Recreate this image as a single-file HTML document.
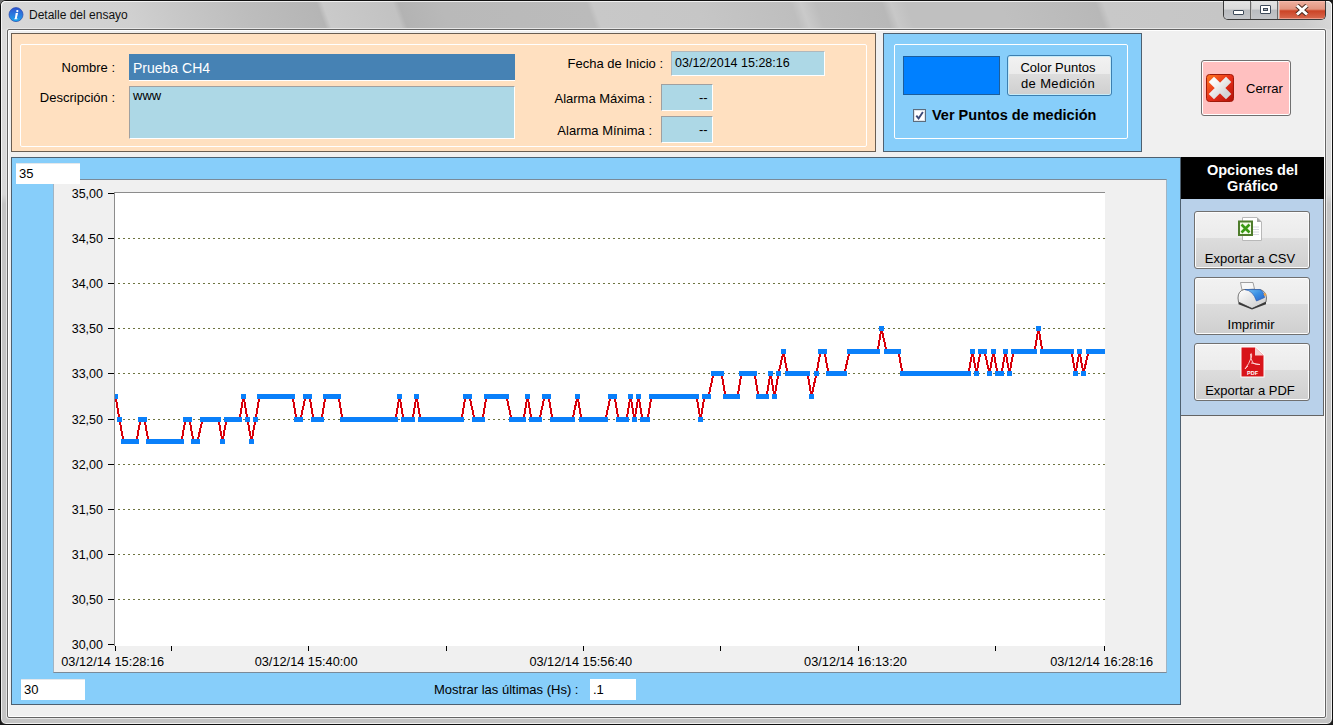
<!DOCTYPE html>
<html><head><meta charset="utf-8">
<style>
*{margin:0;padding:0;box-sizing:border-box}
html,body{width:1333px;height:725px;overflow:hidden;background:#1a1a1a}
body{position:relative;font-family:"Liberation Sans",sans-serif;font-size:13px;color:#000}
.a{position:absolute}
.t{position:absolute;white-space:nowrap;line-height:1}
#frame{left:0;top:0;width:1333px;height:725px;border:1px solid #111;border-radius:6px;
 background:linear-gradient(#dcdcdc 0,#d8d8d8 193px,#c4c4c4 203px,#c4c4c4 100%);
 box-shadow:inset 0 0 0 1px rgba(255,255,255,.75)}
#title{left:1px;top:1px;width:1331px;height:28px;border-radius:5px 5px 0 0;
 background:linear-gradient(70deg,#d8d8d8 3.8px,#d0d0d0 126.0px,#c8c8c8 168.3px,#bdbdbd 236.0px,#b5b5b5 305.5px,#cacaca 311.1px,#c2c2c2 376.9px,#b3b3b3 382.5px,#b9b9b9 422.0px,#bbbbbb 559.2px,#c8c8c8 564.8px,#c6c6c6 661.6px,#bebebe 750.9px,#cacaca 760.3px,#bdbdbd 774.4px,#b8b8b8 836.4px,#c8c8c8 844.9px,#c0c0c0 859.0px,#c0c0c0 947.3px,#b8b8b8 1037.5px,#c8c8c8 1045.0px,#c6c6c6 1152.2px,#cccccc 1225.4px,#d8d8d8 1256.5px);
 box-shadow:inset 0 1px 0 rgba(255,255,255,.75),inset 1px 0 0 rgba(255,255,255,.75),inset -1px 0 0 rgba(255,255,255,.75)}
#client{left:7px;top:29px;width:1319px;height:689px;border:1px solid #646464;border-radius:2px;background:#f0f0f0;box-shadow:inset 0 0 0 1px #fff,0 0 0 1px #e6e6e6}
.panel{position:absolute;border:1px solid #646464}
.grp{position:absolute;border:1px solid #fff;border-radius:2px}
.lbl{position:absolute;white-space:nowrap;line-height:1;font-size:13px}
.tb{position:absolute;border-top:1px solid #a0a0a0;border-left:1px solid #a0a0a0;border-bottom:1px solid #fff;border-right:1px solid #fff}
.btn{position:absolute;border:1px solid #707070;border-radius:3px;background:linear-gradient(#f2f2f2 0%,#ebebeb 46%,#dddddd 46%,#cfcfcf 100%);box-shadow:inset 0 0 0 1px #fcfcfc}
</style></head><body>
<div class="a" style="left:0;top:0;width:7px;height:7px;background:#6e6e6e"></div>
<div id="frame" class="a"></div>
<div id="title" class="a"></div>
<!-- title -->
<svg class="a" style="left:8px;top:7px" width="16" height="16" viewBox="0 0 16 16">
 <defs><linearGradient id="ig" x1="0" y1="0" x2="0" y2="1"><stop offset="0" stop-color="#2f55d0"/><stop offset=".55" stop-color="#2a7ee0"/><stop offset="1" stop-color="#18a8ea"/></linearGradient></defs>
 <circle cx="8" cy="7.6" r="7" fill="url(#ig)" stroke="#2448b0" stroke-width="0.7"/>
 <circle cx="9.3" cy="4.1" r="1.15" fill="#fff"/><path d="M7.7 5.9 L10.1 5.9 L8.7 11.6 L9.6 11.6 L9.4 12.2 L6.1 12.2 L6.3 11.6 L6.9 11.6Z" fill="#fff"/>
</svg>
<div class="t" style="left:29px;top:9px;font-size:12px;color:#111">Detalle del ensayo</div>
<!-- window buttons -->
<div class="a" style="left:1223px;top:1px;width:103px;height:19px;border:1px solid #3a3a3a;border-top:none;border-radius:0 0 5px 5px;overflow:hidden">
 <div class="a" style="left:0;top:0;width:27px;height:18px;background:linear-gradient(#e4e4e4 0%,#dadada 45%,#b9bcc0 50%,#c4c6ca 100%);border-right:1px solid #6a6a6a"></div>
 <div class="a" style="left:28px;top:0;width:26px;height:18px;background:linear-gradient(#e4e4e4 0%,#dadada 45%,#b9bcc0 50%,#c4c6ca 100%);border-right:1px solid #6a6a6a"></div>
 <div class="a" style="left:55px;top:0;width:47px;height:18px;background:linear-gradient(#eeb0a0 0%,#e39580 45%,#cc4426 55%,#d86a50 100%);box-shadow:inset 0 0 0 1px rgba(255,200,190,.55)"></div>
 <div class="a" style="left:9px;top:9px;width:11px;height:5px;background:#fff;border:1px solid #3e4a5a;border-radius:1px"></div>
 <div class="a" style="left:36px;top:4px;width:11px;height:9px;background:#fff;border:1px solid #3e4a5a;border-radius:1px"></div>
 <div class="a" style="left:39px;top:7px;width:5px;height:3px;background:#aab0b8;border:1px solid #3e4a5a"></div>
 <svg class="a" style="left:71px;top:3px" width="14" height="12" viewBox="0 0 14 12"><path d="M2 1.5 L12 10.5 M12 1.5 L2 10.5" stroke="#4a2a20" stroke-width="4.8"/><path d="M2 1.5 L12 10.5 M12 1.5 L2 10.5" stroke="#fff" stroke-width="3"/></svg>
</div>
<div id="client" class="a"></div>

<!-- peach panel -->
<div class="panel" style="left:11px;top:33px;width:865px;height:119px;background:#ffe0c0;border-color:#6a5e52"></div>
<div class="grp" style="left:20px;top:44px;width:847px;height:103px"></div>
<div class="lbl" style="right:1218px;top:61px">Nombre :</div>
<div class="lbl" style="right:1218px;top:91px">Descripción :</div>
<div class="a" style="left:129px;top:54px;width:386px;height:27px;background:#4682b4;border-bottom:1px solid #fff"></div>
<div class="t" style="left:133px;top:61px;font-size:14px;color:#fff">Prueba CH4</div>
<div class="tb" style="left:129px;top:86px;width:386px;height:53px;background:#add8e6"></div>
<div class="lbl" style="left:133px;top:89px">www</div>
<div class="lbl" style="right:670px;top:57px">Fecha de Inicio :</div>
<div class="tb" style="left:671px;top:51px;width:154px;height:25px;background:#add8e6;border-top-color:#b0b8bc;border-left-color:#b0b8bc"></div>
<div class="t" style="left:675px;top:57px;font-size:12.5px">03/12/2014 15:28:16</div>
<div class="lbl" style="right:681px;top:92px">Alarma Máxima :</div>
<div class="tb" style="left:661px;top:84px;width:52px;height:27px;background:#add8e6"></div>
<div class="t" style="left:699px;top:91px;font-size:13px">--</div>
<div class="lbl" style="right:681px;top:124px">Alarma Mínima :</div>
<div class="tb" style="left:661px;top:116px;width:52px;height:27px;background:#add8e6"></div>
<div class="t" style="left:699px;top:123px;font-size:13px">--</div>

<!-- blue panel -->
<div class="panel" style="left:883px;top:33px;width:259px;height:119px;background:#87cefa;border-color:#4e6070"></div>
<div class="grp" style="left:894px;top:44px;width:234px;height:95px"></div>
<div class="a" style="left:903px;top:56px;width:97px;height:39px;background:#0080ff;border:1px solid #1c5e9c"></div>
<div class="btn" style="left:1007px;top:55px;width:105px;height:41px;border-color:#3c7fb1;box-shadow:inset 0 0 0 1px #c8ecf8"></div>
<div class="t" style="left:1006px;top:60px;width:104px;text-align:center;font-size:13px;line-height:15.5px">Color Puntos<br><span style="letter-spacing:.35px">de Medición</span></div>
<div class="a" style="left:913px;top:109px;width:13px;height:13px;border:1px solid #5c6c7c;background:#fff;box-shadow:inset 0 0 0 1px #dde4ea"></div>
<svg class="a" style="left:915px;top:111px" width="9" height="9" viewBox="0 0 9 9"><path d="M1.3 4.6 L3.6 7.4 L7.9 0.9" fill="none" stroke="#3c4a78" stroke-width="1.9"/></svg>
<div class="t" style="left:932px;top:108px;font-size:14.5px;font-weight:bold">Ver Puntos de medición</div>

<!-- Cerrar -->
<div class="btn" style="left:1201px;top:60px;width:90px;height:56px;background:#ffc0c0;box-shadow:inset 0 0 0 1px #fff"></div>
<svg class="a" style="left:1206px;top:74px" width="28" height="28" viewBox="0 0 28 28">
 <defs><linearGradient id="cg" x1="0" y1="0" x2="1" y2="1"><stop offset="0" stop-color="#ff7a20"/><stop offset=".5" stop-color="#e8301a"/><stop offset="1" stop-color="#b01008"/></linearGradient></defs>
 <rect x="0.5" y="0.5" width="27" height="27" rx="3" fill="url(#cg)" stroke="#a01a0a"/>
 <defs><linearGradient id="xg" x1="0" y1="0" x2="1" y2="1"><stop offset="0" stop-color="#fafafa"/><stop offset="1" stop-color="#d4d4d4"/></linearGradient></defs><path d="M8 8 L20 20 M20 8 L8 20" stroke="url(#xg)" stroke-width="7.5" stroke-linecap="square"/>
</svg>
<div class="t" style="left:1246px;top:82px;font-size:13px">Cerrar</div>

<!-- chart panel -->
<div class="panel" style="left:11px;top:157px;width:1170px;height:548px;background:#87cefa;border-color:#4e6070"></div>
<div class="a" style="left:53px;top:179px;width:1114px;height:494px;background:#f0f0f0;border-top:1px solid #7a8a98;border-left:1px solid #a0b4c4;border-bottom:1px solid #7a8a98;border-right:1px solid #a0b4c4"></div>
<div class="a" style="left:16px;top:163px;width:64px;height:21px;background:#fff;border-top:1px solid #e4e8ec"></div>
<div class="t" style="left:19px;top:167px;font-size:13px">35</div>
<div class="a" style="left:115px;top:192px;width:990px;height:454px;background:#fff;border-top:1px solid #8c8c8c"></div>
<div class="a" style="left:114px;top:192px;width:1px;height:454px;background:#8c8c8c"></div>
<svg width="1333" height="725" style="position:absolute;left:0;top:0">
<defs><clipPath id="pc"><rect x="115" y="192" width="990" height="454"/></clipPath></defs>
<g stroke="#6e7440" stroke-width="1" stroke-dasharray="2 3" stroke-dashoffset="2" shape-rendering="crispEdges"><line x1="115" y1="238.5" x2="1105" y2="238.5"/><line x1="115" y1="283.5" x2="1105" y2="283.5"/><line x1="115" y1="328.5" x2="1105" y2="328.5"/><line x1="115" y1="373.5" x2="1105" y2="373.5"/><line x1="115" y1="419.5" x2="1105" y2="419.5"/><line x1="115" y1="464.5" x2="1105" y2="464.5"/><line x1="115" y1="509.5" x2="1105" y2="509.5"/><line x1="115" y1="554.5" x2="1105" y2="554.5"/><line x1="115" y1="599.5" x2="1105" y2="599.5"/></g>
<g clip-path="url(#pc)">
<polyline points="115.5,396.5 119.5,419.5 123.5,441.5 127.5,441.5 131.5,441.5 136.5,441.5 140.5,419.5 144.5,419.5 148.5,441.5 152.5,441.5 156.5,441.5 160.5,441.5 164.5,441.5 169.5,441.5 173.5,441.5 177.5,441.5 181.5,441.5 185.5,419.5 189.5,419.5 193.5,441.5 197.5,441.5 202.5,419.5 206.5,419.5 210.5,419.5 214.5,419.5 218.5,419.5 222.5,441.5 226.5,419.5 230.5,419.5 235.5,419.5 239.5,419.5 243.5,396.5 247.5,419.5 251.5,441.5 255.5,419.5 259.5,396.5 263.5,396.5 267.5,396.5 272.5,396.5 276.5,396.5 280.5,396.5 284.5,396.5 288.5,396.5 292.5,396.5 296.5,419.5 300.5,419.5 305.5,396.5 309.5,396.5 313.5,419.5 317.5,419.5 321.5,419.5 325.5,396.5 329.5,396.5 333.5,396.5 338.5,396.5 342.5,419.5 346.5,419.5 350.5,419.5 354.5,419.5 358.5,419.5 362.5,419.5 366.5,419.5 370.5,419.5 375.5,419.5 379.5,419.5 383.5,419.5 387.5,419.5 391.5,419.5 395.5,419.5 399.5,396.5 403.5,419.5 408.5,419.5 412.5,419.5 416.5,396.5 420.5,419.5 424.5,419.5 428.5,419.5 432.5,419.5 436.5,419.5 441.5,419.5 445.5,419.5 449.5,419.5 453.5,419.5 457.5,419.5 461.5,419.5 465.5,396.5 469.5,396.5 474.5,419.5 478.5,419.5 482.5,419.5 486.5,396.5 490.5,396.5 494.5,396.5 498.5,396.5 502.5,396.5 506.5,396.5 511.5,419.5 515.5,419.5 519.5,419.5 523.5,419.5 527.5,396.5 531.5,419.5 535.5,419.5 539.5,419.5 544.5,396.5 548.5,396.5 552.5,419.5 556.5,419.5 560.5,419.5 564.5,419.5 568.5,419.5 572.5,419.5 577.5,396.5 581.5,419.5 585.5,419.5 589.5,419.5 593.5,419.5 597.5,419.5 601.5,419.5 605.5,419.5 610.5,396.5 614.5,396.5 618.5,419.5 622.5,419.5 626.5,419.5 630.5,396.5 634.5,419.5 638.5,396.5 642.5,419.5 647.5,419.5 651.5,396.5 655.5,396.5 659.5,396.5 663.5,396.5 667.5,396.5 671.5,396.5 675.5,396.5 680.5,396.5 684.5,396.5 688.5,396.5 692.5,396.5 696.5,396.5 700.5,419.5 704.5,396.5 708.5,396.5 713.5,373.5 717.5,373.5 721.5,373.5 725.5,396.5 729.5,396.5 733.5,396.5 737.5,396.5 741.5,373.5 745.5,373.5 750.5,373.5 754.5,373.5 758.5,396.5 762.5,396.5 766.5,396.5 770.5,373.5 774.5,396.5 778.5,373.5 783.5,351.5 787.5,373.5 791.5,373.5 795.5,373.5 799.5,373.5 803.5,373.5 807.5,373.5 811.5,396.5 816.5,373.5 820.5,351.5 824.5,351.5 828.5,373.5 832.5,373.5 836.5,373.5 840.5,373.5 844.5,373.5 849.5,351.5 853.5,351.5 857.5,351.5 861.5,351.5 865.5,351.5 869.5,351.5 873.5,351.5 877.5,351.5 881.5,328.5 886.5,351.5 890.5,351.5 894.5,351.5 898.5,351.5 902.5,373.5 906.5,373.5 910.5,373.5 914.5,373.5 919.5,373.5 923.5,373.5 927.5,373.5 931.5,373.5 935.5,373.5 939.5,373.5 943.5,373.5 947.5,373.5 952.5,373.5 956.5,373.5 960.5,373.5 964.5,373.5 968.5,373.5 972.5,351.5 976.5,373.5 980.5,351.5 984.5,351.5 989.5,373.5 993.5,351.5 997.5,373.5 1001.5,373.5 1005.5,351.5 1009.5,373.5 1013.5,351.5 1017.5,351.5 1022.5,351.5 1026.5,351.5 1030.5,351.5 1034.5,351.5 1038.5,328.5 1042.5,351.5 1046.5,351.5 1050.5,351.5 1055.5,351.5 1059.5,351.5 1063.5,351.5 1067.5,351.5 1071.5,351.5 1075.5,373.5 1079.5,351.5 1083.5,373.5 1088.5,351.5 1092.5,351.5 1096.5,351.5 1100.5,351.5 1104.5,351.5" fill="none" stroke="#d8000a" stroke-width="2" stroke-linejoin="miter" shape-rendering="crispEdges"/>
<g fill="#0a80fa" shape-rendering="crispEdges"><rect x="113" y="394" width="5" height="5"/><rect x="117" y="417" width="5" height="5"/><rect x="121" y="439" width="5" height="5"/><rect x="125" y="439" width="5" height="5"/><rect x="129" y="439" width="5" height="5"/><rect x="134" y="439" width="5" height="5"/><rect x="138" y="417" width="5" height="5"/><rect x="142" y="417" width="5" height="5"/><rect x="146" y="439" width="5" height="5"/><rect x="150" y="439" width="5" height="5"/><rect x="154" y="439" width="5" height="5"/><rect x="158" y="439" width="5" height="5"/><rect x="162" y="439" width="5" height="5"/><rect x="167" y="439" width="5" height="5"/><rect x="171" y="439" width="5" height="5"/><rect x="175" y="439" width="5" height="5"/><rect x="179" y="439" width="5" height="5"/><rect x="183" y="417" width="5" height="5"/><rect x="187" y="417" width="5" height="5"/><rect x="191" y="439" width="5" height="5"/><rect x="195" y="439" width="5" height="5"/><rect x="200" y="417" width="5" height="5"/><rect x="204" y="417" width="5" height="5"/><rect x="208" y="417" width="5" height="5"/><rect x="212" y="417" width="5" height="5"/><rect x="216" y="417" width="5" height="5"/><rect x="220" y="439" width="5" height="5"/><rect x="224" y="417" width="5" height="5"/><rect x="228" y="417" width="5" height="5"/><rect x="233" y="417" width="5" height="5"/><rect x="237" y="417" width="5" height="5"/><rect x="241" y="394" width="5" height="5"/><rect x="245" y="417" width="5" height="5"/><rect x="249" y="439" width="5" height="5"/><rect x="253" y="417" width="5" height="5"/><rect x="257" y="394" width="5" height="5"/><rect x="261" y="394" width="5" height="5"/><rect x="265" y="394" width="5" height="5"/><rect x="270" y="394" width="5" height="5"/><rect x="274" y="394" width="5" height="5"/><rect x="278" y="394" width="5" height="5"/><rect x="282" y="394" width="5" height="5"/><rect x="286" y="394" width="5" height="5"/><rect x="290" y="394" width="5" height="5"/><rect x="294" y="417" width="5" height="5"/><rect x="298" y="417" width="5" height="5"/><rect x="303" y="394" width="5" height="5"/><rect x="307" y="394" width="5" height="5"/><rect x="311" y="417" width="5" height="5"/><rect x="315" y="417" width="5" height="5"/><rect x="319" y="417" width="5" height="5"/><rect x="323" y="394" width="5" height="5"/><rect x="327" y="394" width="5" height="5"/><rect x="331" y="394" width="5" height="5"/><rect x="336" y="394" width="5" height="5"/><rect x="340" y="417" width="5" height="5"/><rect x="344" y="417" width="5" height="5"/><rect x="348" y="417" width="5" height="5"/><rect x="352" y="417" width="5" height="5"/><rect x="356" y="417" width="5" height="5"/><rect x="360" y="417" width="5" height="5"/><rect x="364" y="417" width="5" height="5"/><rect x="368" y="417" width="5" height="5"/><rect x="373" y="417" width="5" height="5"/><rect x="377" y="417" width="5" height="5"/><rect x="381" y="417" width="5" height="5"/><rect x="385" y="417" width="5" height="5"/><rect x="389" y="417" width="5" height="5"/><rect x="393" y="417" width="5" height="5"/><rect x="397" y="394" width="5" height="5"/><rect x="401" y="417" width="5" height="5"/><rect x="406" y="417" width="5" height="5"/><rect x="410" y="417" width="5" height="5"/><rect x="414" y="394" width="5" height="5"/><rect x="418" y="417" width="5" height="5"/><rect x="422" y="417" width="5" height="5"/><rect x="426" y="417" width="5" height="5"/><rect x="430" y="417" width="5" height="5"/><rect x="434" y="417" width="5" height="5"/><rect x="439" y="417" width="5" height="5"/><rect x="443" y="417" width="5" height="5"/><rect x="447" y="417" width="5" height="5"/><rect x="451" y="417" width="5" height="5"/><rect x="455" y="417" width="5" height="5"/><rect x="459" y="417" width="5" height="5"/><rect x="463" y="394" width="5" height="5"/><rect x="467" y="394" width="5" height="5"/><rect x="472" y="417" width="5" height="5"/><rect x="476" y="417" width="5" height="5"/><rect x="480" y="417" width="5" height="5"/><rect x="484" y="394" width="5" height="5"/><rect x="488" y="394" width="5" height="5"/><rect x="492" y="394" width="5" height="5"/><rect x="496" y="394" width="5" height="5"/><rect x="500" y="394" width="5" height="5"/><rect x="504" y="394" width="5" height="5"/><rect x="509" y="417" width="5" height="5"/><rect x="513" y="417" width="5" height="5"/><rect x="517" y="417" width="5" height="5"/><rect x="521" y="417" width="5" height="5"/><rect x="525" y="394" width="5" height="5"/><rect x="529" y="417" width="5" height="5"/><rect x="533" y="417" width="5" height="5"/><rect x="537" y="417" width="5" height="5"/><rect x="542" y="394" width="5" height="5"/><rect x="546" y="394" width="5" height="5"/><rect x="550" y="417" width="5" height="5"/><rect x="554" y="417" width="5" height="5"/><rect x="558" y="417" width="5" height="5"/><rect x="562" y="417" width="5" height="5"/><rect x="566" y="417" width="5" height="5"/><rect x="570" y="417" width="5" height="5"/><rect x="575" y="394" width="5" height="5"/><rect x="579" y="417" width="5" height="5"/><rect x="583" y="417" width="5" height="5"/><rect x="587" y="417" width="5" height="5"/><rect x="591" y="417" width="5" height="5"/><rect x="595" y="417" width="5" height="5"/><rect x="599" y="417" width="5" height="5"/><rect x="603" y="417" width="5" height="5"/><rect x="608" y="394" width="5" height="5"/><rect x="612" y="394" width="5" height="5"/><rect x="616" y="417" width="5" height="5"/><rect x="620" y="417" width="5" height="5"/><rect x="624" y="417" width="5" height="5"/><rect x="628" y="394" width="5" height="5"/><rect x="632" y="417" width="5" height="5"/><rect x="636" y="394" width="5" height="5"/><rect x="640" y="417" width="5" height="5"/><rect x="645" y="417" width="5" height="5"/><rect x="649" y="394" width="5" height="5"/><rect x="653" y="394" width="5" height="5"/><rect x="657" y="394" width="5" height="5"/><rect x="661" y="394" width="5" height="5"/><rect x="665" y="394" width="5" height="5"/><rect x="669" y="394" width="5" height="5"/><rect x="673" y="394" width="5" height="5"/><rect x="678" y="394" width="5" height="5"/><rect x="682" y="394" width="5" height="5"/><rect x="686" y="394" width="5" height="5"/><rect x="690" y="394" width="5" height="5"/><rect x="694" y="394" width="5" height="5"/><rect x="698" y="417" width="5" height="5"/><rect x="702" y="394" width="5" height="5"/><rect x="706" y="394" width="5" height="5"/><rect x="711" y="371" width="5" height="5"/><rect x="715" y="371" width="5" height="5"/><rect x="719" y="371" width="5" height="5"/><rect x="723" y="394" width="5" height="5"/><rect x="727" y="394" width="5" height="5"/><rect x="731" y="394" width="5" height="5"/><rect x="735" y="394" width="5" height="5"/><rect x="739" y="371" width="5" height="5"/><rect x="743" y="371" width="5" height="5"/><rect x="748" y="371" width="5" height="5"/><rect x="752" y="371" width="5" height="5"/><rect x="756" y="394" width="5" height="5"/><rect x="760" y="394" width="5" height="5"/><rect x="764" y="394" width="5" height="5"/><rect x="768" y="371" width="5" height="5"/><rect x="772" y="394" width="5" height="5"/><rect x="776" y="371" width="5" height="5"/><rect x="781" y="349" width="5" height="5"/><rect x="785" y="371" width="5" height="5"/><rect x="789" y="371" width="5" height="5"/><rect x="793" y="371" width="5" height="5"/><rect x="797" y="371" width="5" height="5"/><rect x="801" y="371" width="5" height="5"/><rect x="805" y="371" width="5" height="5"/><rect x="809" y="394" width="5" height="5"/><rect x="814" y="371" width="5" height="5"/><rect x="818" y="349" width="5" height="5"/><rect x="822" y="349" width="5" height="5"/><rect x="826" y="371" width="5" height="5"/><rect x="830" y="371" width="5" height="5"/><rect x="834" y="371" width="5" height="5"/><rect x="838" y="371" width="5" height="5"/><rect x="842" y="371" width="5" height="5"/><rect x="847" y="349" width="5" height="5"/><rect x="851" y="349" width="5" height="5"/><rect x="855" y="349" width="5" height="5"/><rect x="859" y="349" width="5" height="5"/><rect x="863" y="349" width="5" height="5"/><rect x="867" y="349" width="5" height="5"/><rect x="871" y="349" width="5" height="5"/><rect x="875" y="349" width="5" height="5"/><rect x="879" y="326" width="5" height="5"/><rect x="884" y="349" width="5" height="5"/><rect x="888" y="349" width="5" height="5"/><rect x="892" y="349" width="5" height="5"/><rect x="896" y="349" width="5" height="5"/><rect x="900" y="371" width="5" height="5"/><rect x="904" y="371" width="5" height="5"/><rect x="908" y="371" width="5" height="5"/><rect x="912" y="371" width="5" height="5"/><rect x="917" y="371" width="5" height="5"/><rect x="921" y="371" width="5" height="5"/><rect x="925" y="371" width="5" height="5"/><rect x="929" y="371" width="5" height="5"/><rect x="933" y="371" width="5" height="5"/><rect x="937" y="371" width="5" height="5"/><rect x="941" y="371" width="5" height="5"/><rect x="945" y="371" width="5" height="5"/><rect x="950" y="371" width="5" height="5"/><rect x="954" y="371" width="5" height="5"/><rect x="958" y="371" width="5" height="5"/><rect x="962" y="371" width="5" height="5"/><rect x="966" y="371" width="5" height="5"/><rect x="970" y="349" width="5" height="5"/><rect x="974" y="371" width="5" height="5"/><rect x="978" y="349" width="5" height="5"/><rect x="982" y="349" width="5" height="5"/><rect x="987" y="371" width="5" height="5"/><rect x="991" y="349" width="5" height="5"/><rect x="995" y="371" width="5" height="5"/><rect x="999" y="371" width="5" height="5"/><rect x="1003" y="349" width="5" height="5"/><rect x="1007" y="371" width="5" height="5"/><rect x="1011" y="349" width="5" height="5"/><rect x="1015" y="349" width="5" height="5"/><rect x="1020" y="349" width="5" height="5"/><rect x="1024" y="349" width="5" height="5"/><rect x="1028" y="349" width="5" height="5"/><rect x="1032" y="349" width="5" height="5"/><rect x="1036" y="326" width="5" height="5"/><rect x="1040" y="349" width="5" height="5"/><rect x="1044" y="349" width="5" height="5"/><rect x="1048" y="349" width="5" height="5"/><rect x="1053" y="349" width="5" height="5"/><rect x="1057" y="349" width="5" height="5"/><rect x="1061" y="349" width="5" height="5"/><rect x="1065" y="349" width="5" height="5"/><rect x="1069" y="349" width="5" height="5"/><rect x="1073" y="371" width="5" height="5"/><rect x="1077" y="349" width="5" height="5"/><rect x="1081" y="371" width="5" height="5"/><rect x="1086" y="349" width="5" height="5"/><rect x="1090" y="349" width="5" height="5"/><rect x="1094" y="349" width="5" height="5"/><rect x="1098" y="349" width="5" height="5"/><rect x="1102" y="349" width="5" height="5"/></g>
</g>
</svg>
<div class="t" style="right:1230px;top:188.0px;font-size:12.5px">35,00</div><div class="a" style="left:108px;top:193px;width:6px;height:1px;background:#000"></div><div class="t" style="right:1230px;top:233.1px;font-size:12.5px">34,50</div><div class="a" style="left:108px;top:238px;width:6px;height:1px;background:#000"></div><div class="t" style="right:1230px;top:278.2px;font-size:12.5px">34,00</div><div class="a" style="left:108px;top:283px;width:6px;height:1px;background:#000"></div><div class="t" style="right:1230px;top:323.3px;font-size:12.5px">33,50</div><div class="a" style="left:108px;top:328px;width:6px;height:1px;background:#000"></div><div class="t" style="right:1230px;top:368.4px;font-size:12.5px">33,00</div><div class="a" style="left:108px;top:373px;width:6px;height:1px;background:#000"></div><div class="t" style="right:1230px;top:413.5px;font-size:12.5px">32,50</div><div class="a" style="left:108px;top:419px;width:6px;height:1px;background:#000"></div><div class="t" style="right:1230px;top:458.6px;font-size:12.5px">32,00</div><div class="a" style="left:108px;top:464px;width:6px;height:1px;background:#000"></div><div class="t" style="right:1230px;top:503.7px;font-size:12.5px">31,50</div><div class="a" style="left:108px;top:509px;width:6px;height:1px;background:#000"></div><div class="t" style="right:1230px;top:548.8px;font-size:12.5px">31,00</div><div class="a" style="left:108px;top:554px;width:6px;height:1px;background:#000"></div><div class="t" style="right:1230px;top:593.9px;font-size:12.5px">30,50</div><div class="a" style="left:108px;top:599px;width:6px;height:1px;background:#000"></div><div class="t" style="right:1230px;top:639.0px;font-size:12.5px">30,00</div><div class="a" style="left:108px;top:644px;width:6px;height:1px;background:#000"></div><div class="t" style="left:52.7px;width:120px;text-align:center;top:656px;font-size:12.75px">03/12/14 15:28:16</div><div class="t" style="left:246.1px;width:120px;text-align:center;top:656px;font-size:12.75px">03/12/14 15:40:00</div><div class="t" style="left:520.8px;width:120px;text-align:center;top:656px;font-size:12.75px">03/12/14 15:56:40</div><div class="t" style="left:795.5px;width:120px;text-align:center;top:656px;font-size:12.75px">03/12/14 16:13:20</div><div class="t" style="left:1041.7px;width:120px;text-align:center;top:656px;font-size:12.75px">03/12/14 16:28:16</div><div class="a" style="left:115px;top:646px;width:1px;height:5px;background:#000"></div><div class="a" style="left:171px;top:646px;width:1px;height:5px;background:#000"></div><div class="a" style="left:308px;top:646px;width:1px;height:5px;background:#000"></div><div class="a" style="left:446px;top:646px;width:1px;height:5px;background:#000"></div><div class="a" style="left:583px;top:646px;width:1px;height:5px;background:#000"></div><div class="a" style="left:720px;top:646px;width:1px;height:5px;background:#000"></div><div class="a" style="left:858px;top:646px;width:1px;height:5px;background:#000"></div><div class="a" style="left:995px;top:646px;width:1px;height:5px;background:#000"></div><div class="a" style="left:1104px;top:646px;width:1px;height:5px;background:#000"></div>
<div class="a" style="left:21px;top:679px;width:64px;height:21px;background:#fff;border-top:1px solid #e4e8ec"></div>
<div class="t" style="left:24px;top:683px;font-size:13px">30</div>
<div class="t" style="left:434px;top:683px;font-size:13px">Mostrar las últimas (Hs) :</div>
<div class="a" style="left:590px;top:679px;width:46px;height:21px;background:#fff"></div>
<div class="t" style="left:593px;top:683px;font-size:13px">.1</div>

<!-- options -->
<div class="a" style="left:1181px;top:157px;width:143px;height:42px;background:#000"></div>
<div class="t" style="left:1181px;top:163px;width:143px;text-align:center;color:#fff;font-weight:bold;font-size:14.5px;line-height:15.5px">Opciones del<br>Gráfico</div>
<div class="a" style="left:1181px;top:199px;width:143px;height:217px;background:#b9d1ea;border-right:1px solid #646464;border-bottom:1px solid #646464"></div>
<div class="btn" style="left:1194px;top:211px;width:116px;height:58px"></div>
<div class="t" style="left:1192px;top:252px;width:116px;text-align:center">Exportar a CSV</div>
<div class="btn" style="left:1194px;top:277px;width:116px;height:58px"></div>
<div class="t" style="left:1193px;top:318px;width:116px;text-align:center">Imprimir</div>
<div class="btn" style="left:1194px;top:343px;width:116px;height:58px"></div>
<div class="t" style="left:1192px;top:384px;width:116px;text-align:center">Exportar a PDF</div>
<svg class="a" style="left:1237px;top:217px" width="26" height="25" viewBox="0 0 26 25">
 <path d="M5.5 0.5 L20 0.5 L24.5 5 L24.5 23.5 L5.5 23.5Z" fill="#fff" stroke="#b8b8b8"/>
 <path d="M20 0.5 L20 5 L24.5 5Z" fill="#a8a8a8"/>
 <path d="M16 10h6 M16 12.5h6 M16 15h6 M16 17.5h6" stroke="#d8d8e0" stroke-width="1"/>
 <rect x="2" y="4.5" width="13" height="13.5" fill="#f4fbe8" stroke="#4e7c2c" stroke-width="2"/>
 <path d="M4.5 7.5 L12.5 15.5 M12.5 7.5 L4.5 15.5" stroke="#3a9a14" stroke-width="2.6"/>
</svg>
<svg class="a" style="left:1236px;top:281px" width="32" height="29" viewBox="0 0 32 29">
 <defs><linearGradient id="pb" x1="0" y1="0" x2="1" y2="1"><stop offset="0" stop-color="#ffffff"/><stop offset="1" stop-color="#c8c8c8"/></linearGradient>
 <linearGradient id="pc2" x1="0" y1="0" x2="1" y2="1"><stop offset="0" stop-color="#7cc4f4"/><stop offset=".5" stop-color="#3a90e4"/><stop offset="1" stop-color="#2a64c8"/></linearGradient></defs>
 <path d="M4.5 1.5 L17 1.5 L18.5 8 L6 9Z" fill="#f8f8f8" stroke="#8a8a8a" stroke-width=".8"/>
 <path d="M2 17 Q2 10 8 8.5 L24 8.5 Q30 10 30.5 17 L30 21 L16 27.5 L2.5 21Z" fill="url(#pb)" stroke="#6a6a6a" stroke-width=".9"/>
 <path d="M9 8.6 Q17 9.5 20.5 20 L28.5 16.5 Q27.5 10 24 8.6Z" fill="url(#pc2)" stroke="#2a5ab0" stroke-width=".7"/>
 <path d="M2.5 21 L16 27.3 L30 20.8 L30 23.2 L16 28.6 L2.5 23.2Z" fill="#3a3a3a"/>
 <circle cx="29" cy="13.5" r="1.2" fill="#f0a040"/>
</svg>
<svg class="a" style="left:1240px;top:346px" width="25" height="32" viewBox="0 0 25 32">
 <path d="M0.5 0.5 L15.5 0.5 L24.5 9 L24.5 31.5 L0.5 31.5Z" fill="#fff"/>
 <path d="M1.5 1.5 L15 1.5 L23.5 9.5 L23.5 30.5 L1.5 30.5Z" fill="#d8141a"/>
 <path d="M15 1.5 L15 9.5 L23.5 9.5Z" fill="#f4d0d0"/>
 <path d="M5 23 Q9 18 11.5 11 Q12 6 10.5 8 Q10 12 13 17 Q16 19 20 18.5 M5 23 L8 20 M11 17 L20 18.5" fill="none" stroke="#ffd8d8" stroke-width=".9"/>
 <text x="12.5" y="28.5" font-family="Liberation Sans" font-size="5.5" font-weight="bold" fill="#fff" text-anchor="middle">PDF</text>
</svg>
</body></html>
